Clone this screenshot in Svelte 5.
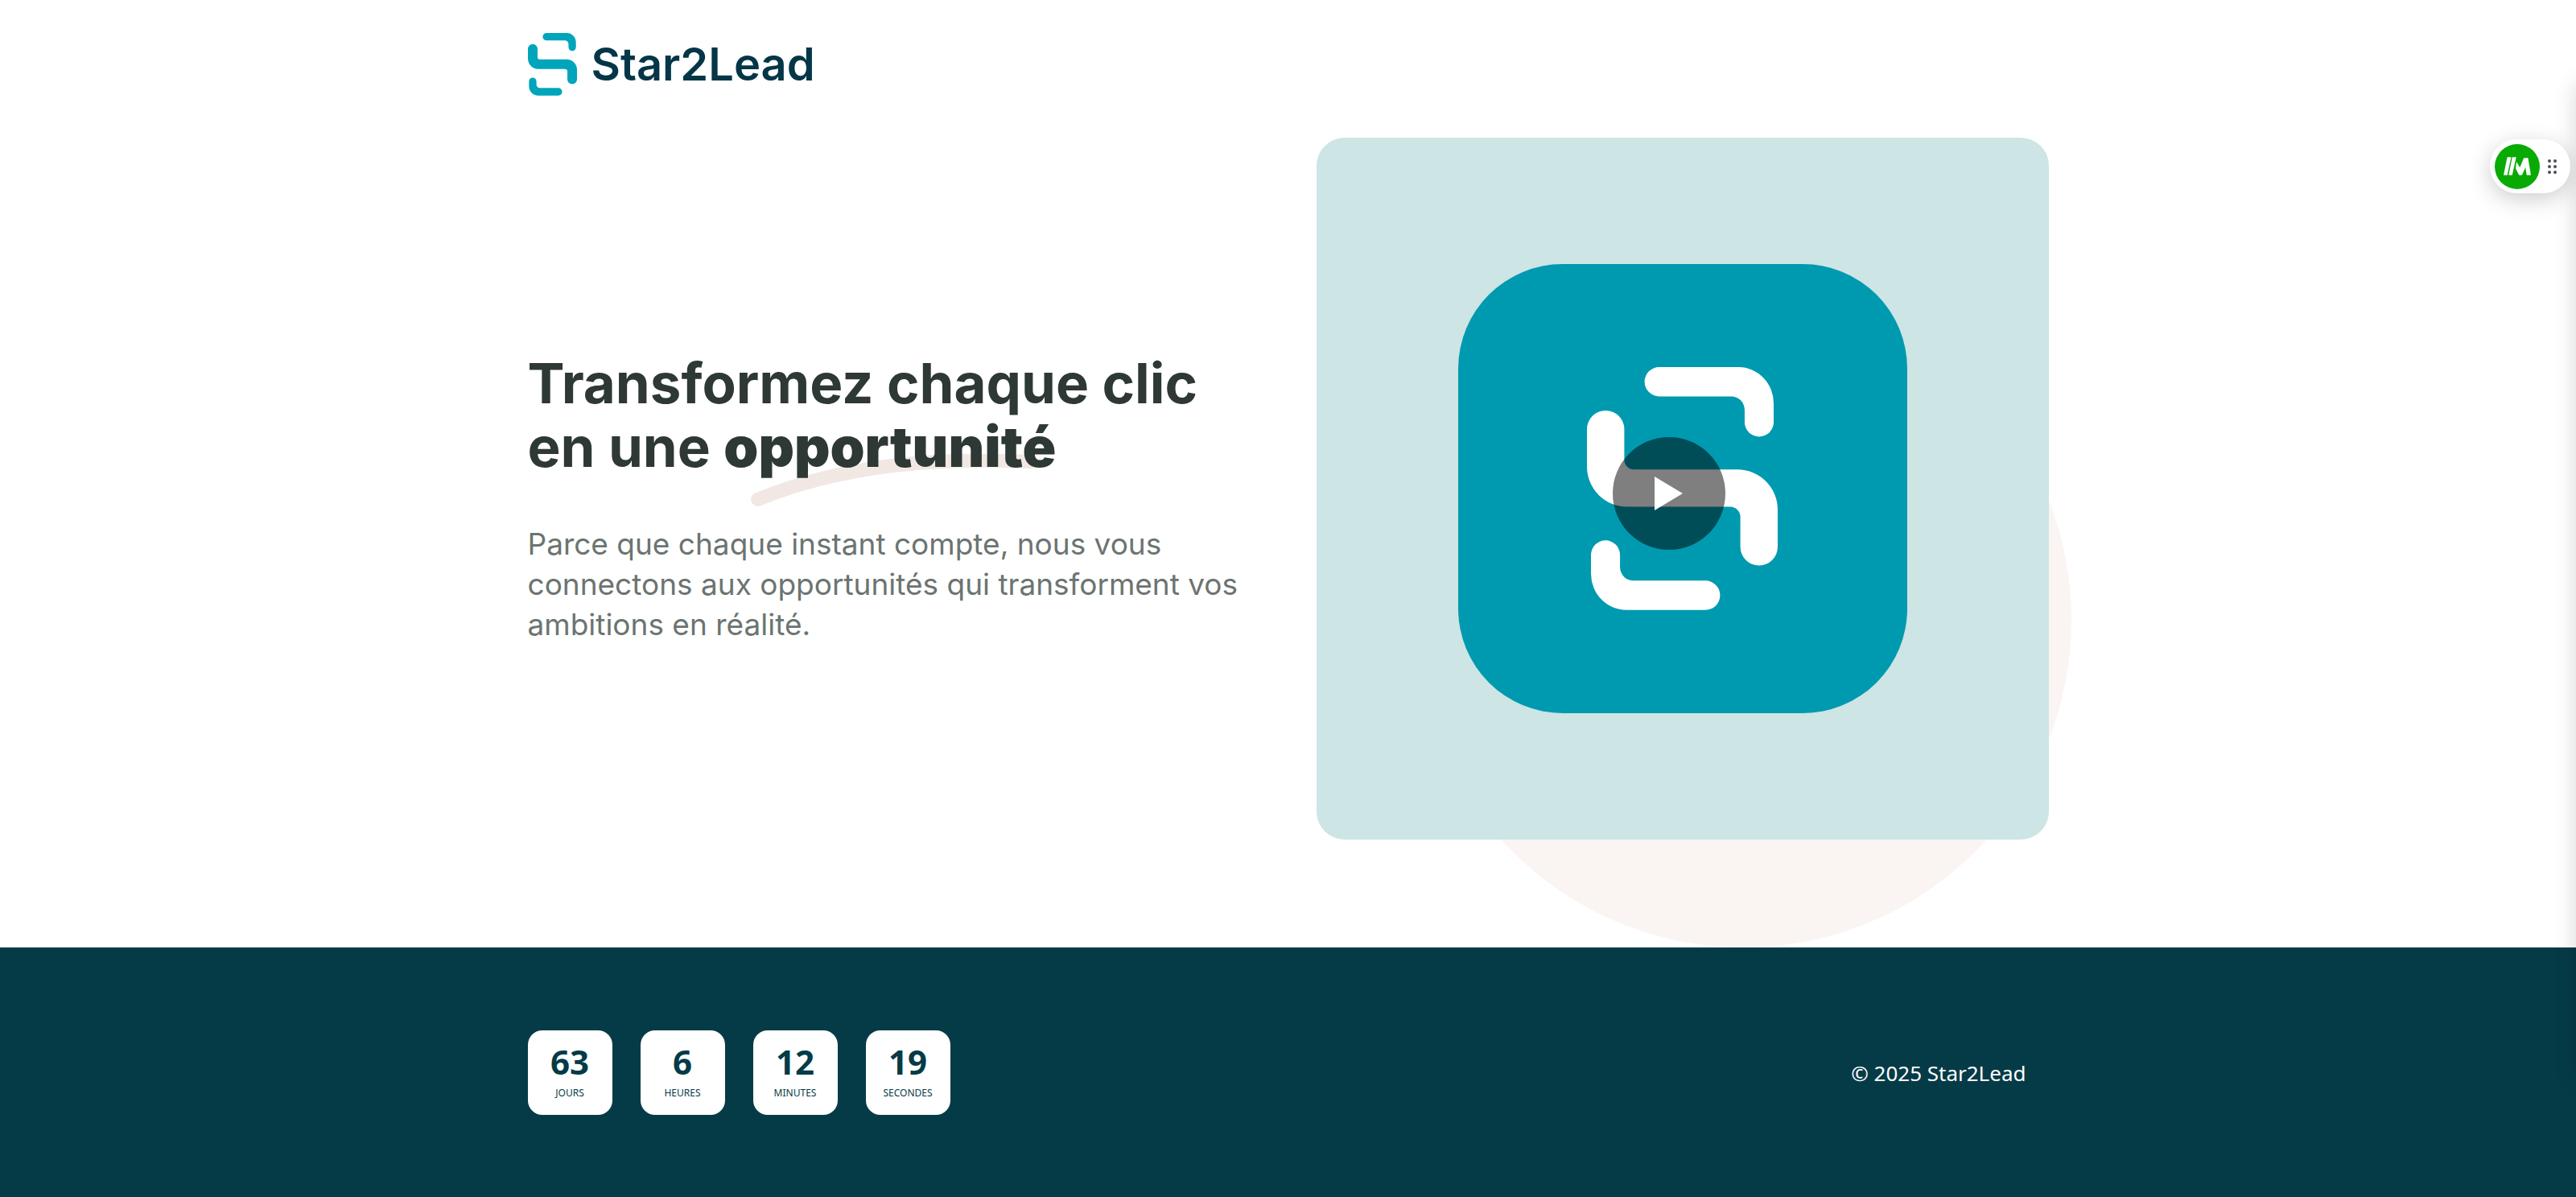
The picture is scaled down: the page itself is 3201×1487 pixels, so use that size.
<script>
  const units = [
    { value: 63, label: 'JOURS' },
    { value: 6, label: 'HEURES' },
    { value: 12, label: 'MINUTES' },
    { value: 19, label: 'SECONDES' }
  ];
  const dots = [0, 1, 2, 3, 4, 5];
</script>

{#snippet mark()}
  <svg class="mark" viewBox="96 80 710 904" aria-hidden="true">
    <path d="M365 80H660A131 135 0 0 1 791 215V285A54 54 0 0 1 683 285V240A50 51 0 0 0 633 189H365A54.5 54.5 0 0 1 365 80Z" />
    <path d="M96 311A69.5 69.5 0 0 1 235 311V425A36 36 0 0 0 271 461H655A150 150 0 0 1 806 611V749A69.5 69.5 0 0 1 667 749V638A38 38 0 0 0 629 600H245A149 149 0 0 1 96 451Z" />
    <path transform="rotate(180 451 532)" d="M365 80H660A131 135 0 0 1 791 215V285A54 54 0 0 1 683 285V240A50 51 0 0 0 633 189H365A54.5 54.5 0 0 1 365 80Z" />
  </svg>
{/snippet}

<div class="page">
  <header class="wrap">
    <a class="brand" href="/">
      {@render mark()}
      <span>Star2Lead</span>
    </a>
  </header>

  <main class="wrap">
    <section class="copy">
      <h1>
        Transformez chaque clic<br />en une
        <strong>opportunité<svg class="swoosh" viewBox="90 402 1070 195" aria-hidden="true">
            <path d="M116 571C400 455 750 411 1132 431" />
          </svg></strong>
      </h1>
      <p>
        Parce que chaque instant compte, nous vous connectons aux opportunités qui transforment vos
        ambitions en réalité.
      </p>
    </section>
    <section class="visual">
      <div class="disc"></div>
      <div class="card">
        <div class="tile">{@render mark()}</div>
        <button class="play" aria-label="Lire la vidéo">
          <svg viewBox="0 0 35 42" aria-hidden="true"><path d="M0 0L35 21L0 42Z" /></svg>
        </button>
      </div>
    </section>
  </main>

  <footer>
    <div class="wrap bar">
      <div class="timer">
        {#each units as u}
          <div class="unit"><b>{u.value}</b><span>{u.label}</span></div>
        {/each}
      </div>
      <p>© 2025 Star2Lead</p>
    </div>
  </footer>
</div>

<div class="edge"></div>
<div class="widget">
  <button class="badge" aria-label="Ouvrir l'assistant">
    <svg viewBox="0 0 104 70" aria-hidden="true">
      <path d="M14 1H29L14 69H0ZM33 1H48L33 69H19ZM49 18L62 40L77 4H93L104 69H88L83 40L70 69H59L46 44Z" />
    </svg>
  </button>
  <div class="grip">{#each dots as d}<i></i>{/each}</div>
</div>

<style>
  :global(body) {
    background: #fff;
    overflow-x: hidden;
  }
  .page {
    min-height: 100vh;
    display: flex;
    flex-direction: column;
    font-family: Inter, sans-serif;
    overflow: hidden;
  }
  .wrap {
    box-sizing: border-box;
    width: 100%;
    max-width: 1890px;
    margin: 0 auto;
  }
  header {
    display: flex;
    padding: 41px 0 52px;
  }
  .brand {
    display: flex;
    align-items: center;
    gap: 18px;
    color: #043647;
    font-size: 56px;
    line-height: 78px;
    font-weight: 600;
    text-decoration: none;
  }
  .mark {
    display: block;
    fill: currentColor;
  }
  .brand .mark {
    width: 61px;
    color: #00a5bb;
  }
  main {
    display: grid;
    grid-template-columns: 1fr 1fr;
    gap: 70px;
    align-items: center;
    padding-bottom: 134px;
  }
  .copy {
    padding-top: 24px;
  }
  h1 {
    margin: 0 0 56px;
    color: #2e3835;
    font-size: 69px;
    line-height: 79px;
    font-weight: 700;
  }
  h1 strong {
    position: relative;
    z-index: 0;
    font-weight: 900;
  }
  .swoosh {
    position: absolute;
    z-index: -1;
    left: 34px;
    bottom: -32px;
    width: 357px;
    height: 65px;
    fill: none;
    stroke: #f2e8e3;
    stroke-width: 52px;
    stroke-linecap: round;
  }
  .copy p {
    margin: 0;
    color: #6b7471;
    font-size: 37px;
    line-height: 50px;
  }
  .visual {
    position: relative;
  }
  .disc {
    position: absolute;
    right: -28px;
    bottom: -134px;
    width: 814px;
    height: 814px;
    border-radius: 50%;
    background: #faf5f3;
  }
  .card {
    position: relative;
    display: grid;
    place-items: center;
    padding: 157px 0;
    border-radius: 35px;
    background: #cde5e4;
  }
  .tile {
    display: grid;
    place-items: center;
    width: 558px;
    height: 558px;
    border-radius: 130px;
    background: #009ab0;
    color: #fff;
  }
  .tile .mark {
    width: 237px;
  }
  .play {
    position: absolute;
    left: calc(50% - 17px);
    top: 442px;
    display: grid;
    place-items: center;
    width: 140px;
    height: 140px;
    padding: 0;
    border: 0;
    border-radius: 50%;
    background: rgba(0, 0, 0, 0.5);
    transform: translate(-50%, -50%);
  }
  .play svg {
    width: 35px;
    fill: #fff;
  }
  footer {
    flex: 1;
    padding: 103px 0 102px;
    background: #053b47;
    color: #fff;
    font-family: 'Noto Sans', sans-serif;
    position: relative;
  }
  .bar {
    display: flex;
    align-items: center;
    justify-content: space-between;
    padding-right: 28px;
  }
  .bar p {
    margin: 0;
    font-size: 26px;
    line-height: 40px;
  }
  .timer {
    display: flex;
    gap: 35px;
  }
  .unit {
    box-sizing: border-box;
    display: flex;
    flex-direction: column;
    align-items: center;
    justify-content: center;
    width: 105px;
    height: 105px;
    padding-bottom: 6px;
    border-radius: 18px;
    background: #fff;
    color: #053b47;
  }
  .unit b {
    font-size: 42px;
    line-height: 56px;
  }
  .unit span {
    font-size: 12px;
    line-height: 22px;
  }
  .edge {
    position: fixed;
    left: 100%;
    top: 105px;
    bottom: 147px;
    width: 60px;
    box-shadow: 0 0 28px rgba(0, 0, 0, 0.16);
  }
  .widget {
    position: fixed;
    top: 173px;
    right: 7px;
    display: flex;
    align-items: center;
    box-sizing: border-box;
    width: 100px;
    height: 67px;
    padding: 0 17px 0 6px;
    justify-content: space-between;
    border-radius: 34px;
    background: #fff;
    box-shadow: 0 7px 28px rgba(0, 0, 0, 0.2);
  }
  .badge {
    display: grid;
    place-items: center;
    width: 56px;
    height: 56px;
    padding: 0;
    border: 0;
    border-radius: 50%;
    background: #0aaa05;
  }
  .badge svg {
    width: 34px;
    fill: #fff;
  }
  .grip {
    display: grid;
    grid-template-columns: 4px 4px;
    gap: 3px;
  }
  .grip i {
    height: 4px;
    border-radius: 2px;
    background: #4a4f57;
  }
</style>
